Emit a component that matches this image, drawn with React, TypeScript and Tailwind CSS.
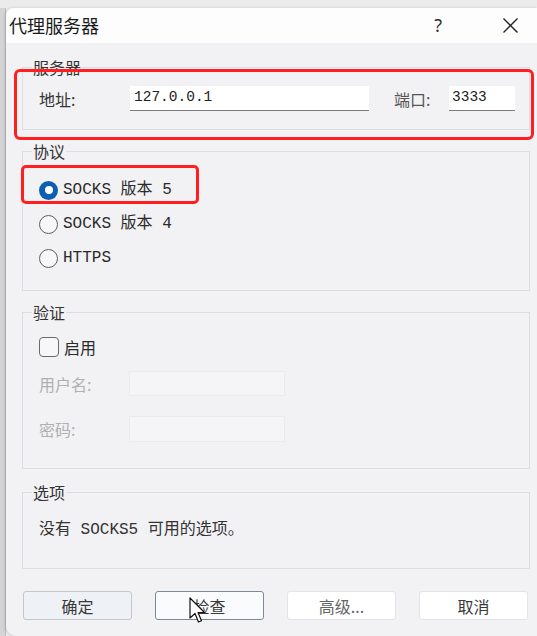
import React, { useState } from "react";

const cjk = "font-['Noto_Sans_CJK_SC',sans-serif]";
const mono = "font-['Liberation_Mono','Noto_Sans_CJK_SC',monospace]";

const Radio: React.FC<{ checked: boolean; label: string; onClick: () => void }> = ({ checked, label, onClick }) => (
  <div className="h-[34px] flex items-center pl-[16px] cursor-default" onClick={onClick}>
    {checked ? (
      <span className="w-[19px] h-[19px] rounded-full bg-[#0d5fb3] flex items-center justify-center">
        <span className="w-[8px] h-[8px] rounded-full bg-white" />
      </span>
    ) : (
      <span className="w-[19px] h-[19px] rounded-full border border-[#5f5f5f] bg-[#f7f7f9]" />
    )}
    <span className={`ml-[5px] text-[16px] text-[#2a2a2a] ${mono}`}>{label}</span>
  </div>
);

const Group: React.FC<{ title: string; className?: string; children: React.ReactNode }> = ({ title, className, children }) => (
  <fieldset className={`w-[508px] border border-[#dddce1] ${className ?? ""}`}>
    <legend className={`ml-[9px] px-[1px] text-[16px] leading-[20px] text-[#333] ${cjk}`}>{title}</legend>
    {children}
  </fieldset>
);

const Button: React.FC<{ title: string; containerStyles?: string }> = ({ title, containerStyles }) => (
  <button
    className={`w-[109px] h-[29px] rounded-[3px] border text-[16px] text-[#3a3a3a] ${cjk} ${containerStyles ?? ""}`}
  >
    {title}
  </button>
);

const App: React.FC = () => {
  const [proto, setProto] = useState<number>(0);
  const [enabled, setEnabled] = useState<boolean>(false);

  return (
    <div className="relative w-[537px] h-[636px] overflow-hidden bg-[#ebebeb] flex">
      {/* window behind */}
      <div className="w-[6px] mt-[8px] bg-[#d4d4d6] border-r border-[#bdbdbd]" />

      <div className="flex-1 mt-[8px] flex flex-col rounded-tl-[8px] rounded-bl-[10px] overflow-hidden bg-[#f2f1f4] shadow-[-1px_0_3px_rgba(0,0,0,0.15)]">
        {/* title bar */}
        <div className="h-[35px] bg-[#fdfdfd] flex items-center pl-[3px]">
          <span className={`text-[18px] text-[#1a1a1a] ${cjk}`}>代理服务器</span>
          <span className="ml-auto mr-[60px] text-[18px] text-[#333] font-['Noto_Sans',sans-serif]">?</span>
          <svg className="mr-[18px]" width="17" height="17" viewBox="0 0 17 17">
            <path d="M1.5 1.5 L15.5 15.5 M15.5 1.5 L1.5 15.5" stroke="#222" strokeWidth="1.4" fill="none" />
          </svg>
        </div>

        <div className="flex-1 pl-[16px] flex flex-col">
          <Group title="服务器" className="mt-[14px] pt-[9px] pb-[18px]">
            <div className="flex items-center pl-[16px]">
              <span className={`w-[91px] text-[16px] text-[#333] ${cjk}`}>地址:</span>
              <div className={`w-[239px] h-[25px] bg-white border-b border-[#7c7c7c] flex items-center pl-[4px] text-[14.5px] text-[#222] ${mono}`}>
                127.0.0.1
              </div>
              <span className={`ml-[25px] w-[55px] text-[16px] text-[#555] ${cjk}`}>端口:</span>
              <div className={`w-[66px] h-[25px] bg-white border-b border-[#7c7c7c] flex items-center pl-[3px] text-[14.5px] text-[#222] ${mono}`}>
                3333
              </div>
            </div>
          </Group>

          <Group title="协议" className="mt-[11px] pt-[12px] pb-[15px]">
            <Radio checked={proto === 0} label="SOCKS 版本 5" onClick={() => setProto(0)} />
            <Radio checked={proto === 1} label="SOCKS 版本 4" onClick={() => setProto(1)} />
            <Radio checked={proto === 2} label="HTTPS" onClick={() => setProto(2)} />
          </Group>

          <Group title="验证" className="mt-[11px] pt-[10px] pb-[26px]">
            <div className="h-[30px] flex items-center pl-[16px]" onClick={() => setEnabled(!enabled)}>
              <span className="w-[20px] h-[20px] rounded-[4px] border border-[#6a6a6a] bg-[#f7f7f9]" />
              <span className={`ml-[5px] text-[16px] text-[#2a2a2a] ${cjk}`}>启用</span>
            </div>
            <div className="mt-[9px] flex items-center pl-[16px]">
              <span className={`w-[90px] text-[16px] text-[#b0b0b0] ${cjk}`}>用户名:</span>
              <div className="w-[156px] h-[25px] bg-[#f5f4f7] border border-[#ebeaee]" />
            </div>
            <div className="mt-[20px] flex items-center pl-[16px]">
              <span className={`w-[90px] text-[16px] text-[#b0b0b0] ${cjk}`}>密码:</span>
              <div className="w-[156px] h-[26px] bg-[#f5f4f7] border border-[#ebeaee]" />
            </div>
          </Group>

          <Group title="选项" className="mt-[13px] pt-[18px] pb-[28px]">
            <p className={`pl-[16px] text-[16px] leading-[20px] text-[#333] ${mono}`}>没有 SOCKS5 可用的选项。</p>
          </Group>

          <div className="mt-[22px] flex gap-[23px] pl-[1px]">
            <Button title="确定" containerStyles="bg-[#eef1f5] border-[#c4c6ca]" />
            <Button title="检查" containerStyles="bg-[#fafbfc] border-[#7d8a96]" />
            <Button title="高级..." containerStyles="bg-white border-[#e4e4e8] text-[#666]" />
            <Button title="取消" containerStyles="bg-white border-[#e4e4e8]" />
          </div>
        </div>
      </div>

      {/* annotation boxes */}
      <div className="absolute left-[14px] top-[69px] w-[520px] h-[71px] border-[3px] border-[#ff1f1f] rounded-[6px]" />
      <div className="absolute left-[21px] top-[165px] w-[178px] h-[39px] border-[3px] border-[#ff1f1f] rounded-[5px]" />

      {/* mouse cursor */}
      <svg className="absolute left-[189px] top-[597px]" width="18" height="27" viewBox="0 0 18 27">
        <path d="M1 1 L1 21 L6 16.5 L9.5 25 L12.5 23.8 L9 15.5 L15.5 15.5 Z" fill="white" stroke="#111" strokeWidth="1.2" strokeLinejoin="round" />
      </svg>
    </div>
  );
};

export default App;
